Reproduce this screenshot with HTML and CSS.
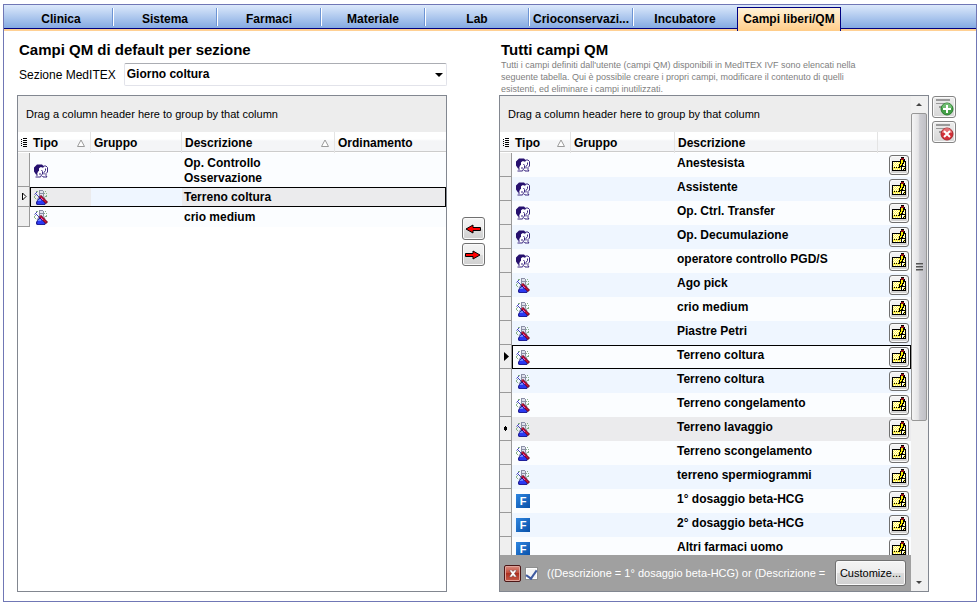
FILE: index.html
```html
<!DOCTYPE html>
<html lang="it">
<head>
    <meta charset="UTF-8">
    <meta name="viewport" content="width=device-width, initial-scale=1.0">
    <title>Campi liberi/QM</title>
    <link rel="stylesheet" href="styles.css">
</head>
<body>
    <!-- Iconos reutilizables -->
    <svg class="defs" aria-hidden="true">
        <symbol id="people" viewBox="0 0 14 14">
            <path fill="#26106e" d="M3 0h5l2 2v1H6v1H5v3H4v3H2L0 7V3z"/>
            <path fill="#fff" d="M6 3h2l1 2v4l-1 3H4l-1-2 1-3h1V4z"/>
            <path fill="none" stroke="#3b2780" d="M3 9.500v2M1.500 12.500h5l1-2 1-1V7L7.500 5.500M5 9.500h2"/>
            <path fill="#fff" d="M9 3h3l1 2v4l-1 3h-2V9l1-3z"/>
            <path fill="none" stroke="#3b2780" d="M8.500 2.500L10 1.500h2l1.500 1.500v4.500l-1.500 1.500v2l1 1.500h-4l-.5-1M11.500 4v2l-1.500 2v2"/>
        </symbol>
        <symbol id="flask" viewBox="0 0 14 15">
            <path fill="#e8ebf5" stroke="#8b8fa3" d="M5.500 1v5l-2.500 4M9.500 1v5l1.500 3"/>
            <path fill="#8b90a6" d="M5 0h4v1H5zM6 3h3v1H6z"/>
            <path fill="#dfe2ee" d="M6 1h3v2H6zM6 4h3v3H6z"/>
            <path fill="#20209a" d="M5 8h4l3 5-1 2H3l-1-1v-2z"/>
            <path fill="#2a38f2" d="M5 9h4l2 4-1 1H4l-1-1z"/>
            <path fill="#6b86ff" d="M5 9h2v2H4v-1h1z"/>
            <path stroke="#4343bd" d="M.5 4.500L3 2M2 4l4 4"/>
            <path stroke="#5c0620" stroke-width="3" d="M6 6l7 7"/>
            <path stroke="#c8143c" stroke-width="1.500" d="M6 6l6.500 6.500"/>
            <path stroke="#df4fd0" d="M7 8l2 2"/>
            <path fill="#86b288" d="M2 1h2v1H2zM0 6h1v2H0zM1 8h1v1H1zM1 5h1v1H1zM11 1h1v1h-1zM10 3h1v1h-1zM12 3h1v1h-1zM12 5h1v2h-1zM11 6h1v1h-1z"/>
        </symbol>
        <symbol id="edit" viewBox="0 0 16 16">
            <path d="M1 4h8v1H2v8h12v1H1zM14 4h1v10h-1zM12 4h2v1h-2z"/>
            <path fill="#fff352" d="M2 5h12v8H2z"/>
            <path fill="#fffde6" d="M2 5h1v1H2zM4 5h1v1H4zM6 5h1v1H6zM3 6h1v1H3zM5 6h1v1H5zM7 6h1v1H7zM2 7h1v1H2zM4 7h1v1H4zM6 7h1v1H6zM3 8h1v1H3zM5 8h1v1H5zM2 9h1v1H2zM4 9h1v1H4zM6 9h1v1H6zM3 12h1v1H3zM5 12h1v1H5zM7 12h1v1H7zM9 12h1v1H9zM13 6h1v1h-1zM12 7h1v1h-1zM13 8h1v1h-1z"/>
            <path d="M9 2h1V0h3v2h1v2h-1v3h-1v2h-1v1H9v1H8V7h1z"/>
            <path fill="#ffee00" d="M10 3h2v3h-1v2h-1v1H9V7h1z"/>
            <path fill="#8d1118" d="M10 1h3v2h-3z"/>
            <path d="M3 10h1v1H3zM5 10h1v1H5zM7 10h1v1H7zM10 9h4v1h-3v3h-1z"/>
            <path fill="#fff" d="M11 10h2v1h-1v2h-1z"/>
            <path d="M12 12h1v1h-1zM13 11h1v1h-1z"/>
        </symbol>
        <symbol id="sort" viewBox="0 0 8 8">
            <path fill="#fff" stroke="#9a9a9a" d="M4 1L.5 7.500h7z"/>
        </symbol>
        <symbol id="menu" viewBox="0 0 7 9">
            <path d="M0 1h1v1H0zM0 3h1v1H0zM0 5h1v1H0zM0 7h1v1H0zM2 0h4v1H2zM2 2h4v1H2zM2 4h4v1H2zM2 6h4v1H2zM2 8h4v1H2z"/>
        </symbol>
        <symbol id="arrow" viewBox="0 0 16 10">
            <path fill="#f00" stroke="#000" d="M1 5l7-4v2.500h7.500v3H8V9z"/>
        </symbol>
        <symbol id="lines" viewBox="0 0 20 18">
            <path fill="#999" d="M2 1h14v2H2zM2 5h14v1H2zM5 8h9v2H5z"/>
        </symbol>
    </svg>

    <div class="window">
        <nav class="tabs">
            <a href="#">Clinica</a>
            <a href="#">Sistema</a>
            <a href="#">Farmaci</a>
            <a href="#">Materiale</a>
            <a href="#">Lab</a>
            <a href="#">Crioconservazi...</a>
            <a href="#" class="last">Incubatore</a>
            <a href="#" class="active">Campi liberi/QM</a>
        </nav>

        <main class="content">
            <div class="intro">
                <h1>Campi QM di default per sezione</h1>
                <div class="field">
                    <label for="sezione">Sezione MedITEX</label>
                    <div class="select">
                        <select id="sezione">
                            <option>Giorno coltura</option>
                        </select>
                    </div>
                </div>
            </div>

            <div class="intro intro-right">
                <h1>Tutti campi QM</h1>
                <p>Tutti i campi definiti dall'utente (campi QM) disponibili in MedITEX IVF sono elencati nella<br>seguente tabella. Qui è possibile creare i propri campi, modificare il contenuto di quelli<br>esistenti, ed eliminare i campi inutilizzati.</p>
            </div>

            <!-- Campos de la sección -->
            <section class="list list-left">
                <div class="list-main">
                    <div class="group-bar">Drag a column header here to group by that column</div>
                    <table>
                        <colgroup><col class="c-ind"><col class="c-tipo"><col class="c-gruppo"><col class="c-desc"><col></colgroup>
                        <thead>
                            <tr>
                                <th><svg class="menu"><use href="#menu"/></svg></th>
                                <th><span>Tipo <svg class="sort"><use href="#sort"/></svg></span></th>
                                <th>Gruppo</th>
                                <th><span>Descrizione <svg class="sort"><use href="#sort"/></svg></span></th>
                                <th>Ordinamento</th>
                            </tr>
                        </thead>
                        <tbody>
                            <tr class="tall"><td></td><td><svg class="icon"><use href="#people"/></svg></td><td></td><td>Op. Controllo Osservazione</td><td></td></tr>
                            <tr class="focus"><td><svg class="mark" viewBox="0 0 5 9"><path fill="#fff" stroke="#000" d="M.5 1v7L4 4.500z"/></svg></td><td><svg class="icon"><use href="#flask"/></svg></td><td></td><td>Terreno coltura</td><td></td></tr>
                            <tr><td></td><td><svg class="icon"><use href="#flask"/></svg></td><td></td><td>crio medium</td><td></td></tr>
                        </tbody>
                    </table>
                </div>
            </section>

            <div class="move">
                <button type="button" aria-label="Aggiungi"><svg class="arrow"><use href="#arrow"/></svg></button>
                <button type="button" aria-label="Rimuovi"><svg class="arrow right"><use href="#arrow"/></svg></button>
            </div>

            <!-- Todos los campos -->
            <section class="list list-right">
                <div class="list-main">
                    <div class="group-bar">Drag a column header here to group by that column</div>
                    <div class="rows">
                        <table>
                            <colgroup><col class="c-ind"><col class="c-tipo"><col class="c-gruppo"><col><col class="c-edit"></colgroup>
                            <thead>
                                <tr>
                                    <th><svg class="menu"><use href="#menu"/></svg></th>
                                    <th><span>Tipo <svg class="sort"><use href="#sort"/></svg></span></th>
                                    <th>Gruppo</th>
                                    <th>Descrizione</th>
                                    <th></th>
                                </tr>
                            </thead>
                            <tbody>
                                <tr><td></td><td><svg class="icon"><use href="#people"/></svg></td><td></td><td>Anestesista</td><td><button type="button" aria-label="Modifica"><svg><use href="#edit"/></svg></button></td></tr>
                                <tr><td></td><td><svg class="icon"><use href="#people"/></svg></td><td></td><td>Assistente</td><td><button type="button" aria-label="Modifica"><svg><use href="#edit"/></svg></button></td></tr>
                                <tr><td></td><td><svg class="icon"><use href="#people"/></svg></td><td></td><td>Op. Ctrl. Transfer</td><td><button type="button" aria-label="Modifica"><svg><use href="#edit"/></svg></button></td></tr>
                                <tr><td></td><td><svg class="icon"><use href="#people"/></svg></td><td></td><td>Op. Decumulazione</td><td><button type="button" aria-label="Modifica"><svg><use href="#edit"/></svg></button></td></tr>
                                <tr><td></td><td><svg class="icon"><use href="#people"/></svg></td><td></td><td>operatore controllo PGD/S</td><td><button type="button" aria-label="Modifica"><svg><use href="#edit"/></svg></button></td></tr>
                                <tr><td></td><td><svg class="icon"><use href="#flask"/></svg></td><td></td><td>Ago pick</td><td><button type="button" aria-label="Modifica"><svg><use href="#edit"/></svg></button></td></tr>
                                <tr><td></td><td><svg class="icon"><use href="#flask"/></svg></td><td></td><td>crio medium</td><td><button type="button" aria-label="Modifica"><svg><use href="#edit"/></svg></button></td></tr>
                                <tr><td></td><td><svg class="icon"><use href="#flask"/></svg></td><td></td><td>Piastre Petri</td><td><button type="button" aria-label="Modifica"><svg><use href="#edit"/></svg></button></td></tr>
                                <tr class="focus"><td><svg class="mark" viewBox="0 0 5 9"><path d="M0 0v9l5-4.500z"/></svg></td><td><svg class="icon"><use href="#flask"/></svg></td><td></td><td>Terreno coltura</td><td><button type="button" aria-label="Modifica"><svg><use href="#edit"/></svg></button></td></tr>
                                <tr><td></td><td><svg class="icon"><use href="#flask"/></svg></td><td></td><td>Terreno coltura</td><td><button type="button" aria-label="Modifica"><svg><use href="#edit"/></svg></button></td></tr>
                                <tr><td></td><td><svg class="icon"><use href="#flask"/></svg></td><td></td><td>Terreno congelamento</td><td><button type="button" aria-label="Modifica"><svg><use href="#edit"/></svg></button></td></tr>
                                <tr class="selected"><td><svg class="mark" viewBox="0 0 5 9"><path d="M0 3h1V2h1v1h1v3H2v1H1V6H0z"/></svg></td><td><svg class="icon"><use href="#flask"/></svg></td><td></td><td>Terreno lavaggio</td><td><button type="button" aria-label="Modifica"><svg><use href="#edit"/></svg></button></td></tr>
                                <tr><td></td><td><svg class="icon"><use href="#flask"/></svg></td><td></td><td>Terreno scongelamento</td><td><button type="button" aria-label="Modifica"><svg><use href="#edit"/></svg></button></td></tr>
                                <tr><td></td><td><svg class="icon"><use href="#flask"/></svg></td><td></td><td>terreno spermiogrammi</td><td><button type="button" aria-label="Modifica"><svg><use href="#edit"/></svg></button></td></tr>
                                <tr><td></td><td><span class="icon-f">F</span></td><td></td><td>1° dosaggio beta-HCG</td><td><button type="button" aria-label="Modifica"><svg><use href="#edit"/></svg></button></td></tr>
                                <tr><td></td><td><span class="icon-f">F</span></td><td></td><td>2° dosaggio beta-HCG</td><td><button type="button" aria-label="Modifica"><svg><use href="#edit"/></svg></button></td></tr>
                                <tr><td></td><td><span class="icon-f">F</span></td><td></td><td>Altri farmaci uomo</td><td><button type="button" aria-label="Modifica"><svg><use href="#edit"/></svg></button></td></tr>
                            </tbody>
                        </table>
                    </div>
                    <div class="filter">
                        <button type="button" class="clear" aria-label="Rimuovi filtro"><svg viewBox="0 0 8 7"><path fill="#fff" stroke="#5b2222" stroke-width=".5" d="M0 0h3l1 1.500L5 0h3L5.500 3.500 8 7H5L4 5.500 3 7H0l2.500-3.500z"/></svg></button>
                        <input type="checkbox" id="filtro" checked>
                        <label for="filtro">((Descrizione = 1° dosaggio beta-HCG) or (Descrizione = 2</label>
                        <button type="button" class="customize">Customize...</button>
                    </div>
                </div>
                <div class="scrollbar" aria-hidden="true">
                    <div class="step up"></div>
                    <div class="thumb"><span></span></div>
                    <div class="rest"></div>
                    <div class="step down"></div>
                </div>
            </section>

            <div class="side">
                <button type="button" aria-label="Nuovo campo"><svg viewBox="0 0 20 18"><use href="#lines"/><circle cx="13" cy="11" r="6" fill="#43a047" stroke="#2b7d2f"/><path fill="#8fd08f" opacity=".6" d="M8 10a5 5 0 0 1 10 0z"/><path fill="#fff" d="M12 7h2v3h3v2h-3v3h-2v-3H9v-2h3z"/></svg></button>
                <button type="button" aria-label="Elimina campo"><svg viewBox="0 0 20 18"><use href="#lines"/><circle cx="13" cy="11" r="6" fill="#d32f38" stroke="#a82a30"/><path fill="#f09a9a" opacity=".6" d="M8 10a5 5 0 0 1 10 0z"/><path stroke="#fff" stroke-width="2" d="M10 8l6 6M16 8l-6 6"/></svg></button>
            </div>
        </main>
    </div>
</body>
</html>
```
FILE: styles.css
```css
/* Estilos generales */
* {
    box-sizing: border-box;
}

body {
    font-family: "Liberation Sans", Arial, sans-serif;
    font-size: 12px;
    color: #000;
    background-color: #fff;
    margin: 0;
    padding: 4px 3px 3px;
    height: 100vh;
}

button {
    font-family: inherit;
    padding: 0;
    border: 1px solid #707070;
    border-radius: 3px;
    background: linear-gradient(#f4f4f4, #ececec 50%, #dcdcdc 50%, #d0d0d0);
    box-shadow: inset 0 0 0 1px #fafafa;
    display: flex;
    align-items: center;
    justify-content: center;
}

svg {
    display: block;
}

.defs {
    display: none;
}

.window {
    height: 100%;
    border: 1px solid #7077b5;
    display: flex;
    flex-direction: column;
}

/* Pestañas */
.tabs {
    display: flex;
    height: 26px;
    flex-shrink: 0;
    padding: 2px 0 0 5px;
    background: linear-gradient(#dce9fb, #84aae2 23px, #000080 23px, #000080 24px, #ffd093 24px);
}

.tabs a {
    width: 104px;
    height: 18px;
    margin-top: 1px;
    line-height: 22px;
    font-weight: bold;
    text-align: center;
    white-space: nowrap;
    color: #000;
    text-decoration: none;
    box-shadow: inset -1px 0 #6c94d4, 1px 0 #fff;
}

.tabs a.last {
    box-shadow: none;
}

.tabs a.active {
    height: 24px;
    margin-top: 0;
    border: 1px solid #000080;
    border-bottom: none;
    background: linear-gradient(#fff3d8, #ffcc88);
    box-shadow: none;
}

/* Contenido */
.content {
    flex: 1;
    min-height: 0;
    display: grid;
    grid-template-columns: 1fr 52px 1fr 27px;
    grid-template-rows: auto 1fr;
    padding: 10px 20px 9px 13px;
}

.intro {
    padding-left: 2px;
}

.intro-right {
    grid-column: 3 / 5;
}

h1 {
    font-size: 15px;
    line-height: 18px;
    margin: 0;
}

.intro p {
    font-size: 9px;
    line-height: 12px;
    margin: 0;
    color: #808080;
}

.field {
    display: flex;
    align-items: center;
    gap: 8px;
    margin: 4px 0 9px;
}

.select {
    position: relative;
    flex: 1;
}

.select::after {
    content: "";
    position: absolute;
    right: 4px;
    top: 10px;
    border: 4px solid transparent;
    border-top-color: #000;
    border-bottom: none;
    pointer-events: none;
}

select {
    appearance: none;
    display: block;
    width: 100%;
    height: 23px;
    padding: 0 2px 2px;
    font-family: inherit;
    font-size: 12px;
    font-weight: bold;
    color: #000;
    background-color: #fff;
    border: 1px solid #e2e3ea;
    border-top-color: #abadb3;
    border-radius: 2px;
}

/* Listas */
.list {
    display: flex;
    min-width: 0;
    min-height: 0;
    border: 1px solid #828790;
}

.list-left {
    grid-column: 1;
}

.list-main {
    flex: 1;
    min-width: 0;
    display: flex;
    flex-direction: column;
}

.group-bar {
    height: 36px;
    flex-shrink: 0;
    padding-left: 8px;
    font-size: 11px;
    line-height: 36px;
    background-color: #ededed;
}

.rows {
    flex: 1;
    min-height: 0;
    overflow: hidden;
}

table {
    width: 100%;
    table-layout: fixed;
    border-collapse: separate;
    border-spacing: 0;
}

.c-ind {
    width: 12px;
}

.c-tipo {
    width: 61px;
}

.c-gruppo {
    width: 91px;
}

.c-desc {
    width: 153px;
}

.list-right .c-tipo {
    width: 59px;
}

.list-right .c-gruppo {
    width: 104px;
}

.c-edit {
    width: 33px;
}

th {
    height: 21px;
    padding: 0 3px;
    line-height: 20px;
    text-align: left;
    border-right: 1px solid #e4e4e4;
    background: linear-gradient(#fff 7px, #f4f5f7 9px, #f4f5f7 19px, #ccc 19px, #ccc 20px, #fff 20px);
}

th:first-child,
th:last-child {
    border-right: none;
}

th span {
    display: flex;
    align-items: center;
    justify-content: space-between;
}

.sort {
    width: 8px;
    height: 8px;
    margin-right: 2px;
}

.menu {
    width: 7px;
    height: 9px;
}

td {
    height: 24px;
    padding: 0 2px;
    vertical-align: top;
    font-weight: bold;
    line-height: 20px;
    background-color: #fbfdff;
}

.list-left td {
    height: 20px;
}

tbody tr:nth-child(even) td {
    background-color: #eff6ff;
}

.list-left .tall td {
    height: 34px;
    padding-top: 3px;
    line-height: 15px;
    padding-right: 60px;
}

.list-left .tall td:nth-child(-n+2) {
    padding-right: 0;
}

/* Columna indicadora */
tbody tr td:first-child,
tbody tr:nth-child(even) td:first-child {
    padding: 0 0 0 4px;
    vertical-align: middle;
    background-color: #efefef;
    border-right: 1px solid #9a9a9a;
    border-bottom: 1px solid #9a9a9a;
}

.mark {
    width: 5px;
    height: 9px;
}

td:nth-child(2) {
    padding-left: 4px;
    vertical-align: middle;
}

tbody tr.selected td:not(:first-child),
.list-left .focus td:not(:first-child):not(:nth-child(3)) {
    background-color: #ebebed;
}

.list-right .focus td:not(:first-child) {
    background-color: #fbfdff;
}

.focus td {
    box-shadow: inset 0 1px #000, inset 0 -1px #000;
}

.focus td:first-child {
    box-shadow: none;
}

.focus td:nth-child(2) {
    box-shadow: inset 1px 1px #000, inset 0 -1px #000;
}

.focus td:last-child {
    box-shadow: inset -1px -1px #000, inset 0 1px #000;
}

td button {
    width: 20px;
    height: 20px;
    margin: 2px 0 0 auto;
}

td button svg {
    width: 16px;
    height: 16px;
}

.icon {
    width: 14px;
    height: 15px;
}

.icon-f {
    display: block;
    width: 14px;
    height: 14px;
    font-size: 11px;
    line-height: 15px;
    text-align: center;
    color: #fff;
    background: linear-gradient(135deg, #2f86e0, #0850a8);
}

/* Filtro */
.filter {
    display: flex;
    align-items: center;
    height: 36px;
    flex-shrink: 0;
    padding: 0 5px 0 4px;
    font-size: 11px;
    background-color: #a0a0a0;
}

.filter label {
    flex: 1;
    overflow: hidden;
    white-space: nowrap;
    color: #fff;
    margin: 0 8px 0 9px;
}

.filter input {
    appearance: none;
    width: 13px;
    height: 13px;
    margin: 0 0 0 4px;
    border: 1px solid #8e8f8f;
    background-color: #f4f4f4;
    box-shadow: inset 0 0 0 1px #fff;
    display: grid;
    place-items: center;
}

.filter input:checked::before {
    content: "";
    width: 5px;
    height: 9px;
    border: solid #3f5aa0;
    border-width: 0 2px 2px 0;
    transform: rotate(35deg);
}

.filter .clear {
    width: 17px;
    height: 17px;
    border-color: #4c1616;
    border-radius: 2px;
    background: linear-gradient(#d98c80, #bf4534 50%, #ac3020 50%, #c65a48);
    box-shadow: inset 0 0 0 1px #e0a49a;
}

.clear svg {
    width: 8px;
    height: 7px;
}

.filter .customize {
    width: 71px;
    height: 26px;
    font-size: 11px;
}

/* Barra de desplazamiento */
.scrollbar {
    width: 17px;
    display: flex;
    flex-direction: column;
    padding-right: 1px;
    background-color: #f0f0f0;
}

.step {
    height: 17px;
    display: grid;
    place-items: center;
}

.step::before {
    content: "";
    border: 3px solid transparent;
}

.up::before {
    border-bottom-color: #444;
    border-top: none;
}

.down::before {
    border-top-color: #444;
    border-bottom: none;
}

.thumb {
    flex: 2;
    display: grid;
    place-items: center;
    border: 1px solid #979797;
    border-radius: 2px;
    background: linear-gradient(to right, #f5f5f5, #e4e4e6 45%, #cdcdd2 55%, #c0c0c6);
}

.thumb span {
    width: 7px;
    height: 8px;
    background: repeating-linear-gradient(#555 0 1px, #999 1px 2px, transparent 2px 3px);
}

.rest {
    flex: 1;
}

/* Botones laterales */
.move {
    display: flex;
    flex-direction: column;
    align-items: center;
    gap: 3px;
    padding-top: 122px;
}

.move button {
    width: 23px;
    height: 23px;
}

.arrow {
    width: 16px;
    height: 10px;
}

.arrow.right {
    transform: rotate(180deg);
}

.side {
    display: flex;
    flex-direction: column;
    gap: 3px;
    padding: 1px 0 0 3px;
}

.side button {
    height: 22px;
    border-color: #858585;
    background: linear-gradient(#ededed, #d6d6d6);
}

.side svg {
    width: 20px;
    height: 18px;
}
```
